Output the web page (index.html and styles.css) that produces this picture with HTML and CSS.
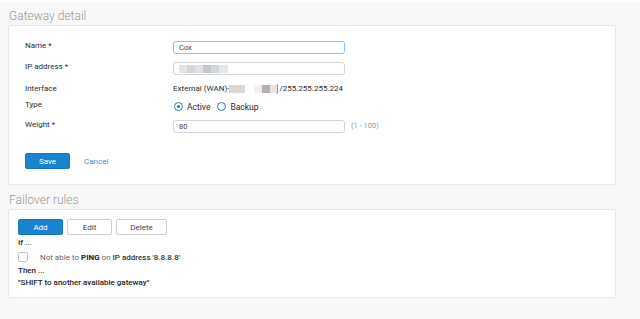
FILE: index.html
```html
<!DOCTYPE html>
<html lang="en">
<head>
  <meta charset="UTF-8" />
  <title>Gateway detail</title>
  <link rel="stylesheet" href="styles.css">
</head>
<body>
  <h2 class="section-title first">Gateway detail</h2>
  <div class="panel detail-panel">
    <div class="row">
      <label class="field-label">Name *</label>
      <div class="input focused">Cox</div>
    </div>
    <div class="row">
      <label class="field-label">IP address *</label>
      <div class="input">
        <span class="blur b1"></span><span class="blur b2"></span><span class="blur b3"></span><span class="blur b4"></span><span class="blur b5"></span><span class="blur b6"></span>
      </div>
    </div>
    <div class="row row-text">
      <label class="field-label">Interface</label>
      <div class="value">External (WAN)-<span class="blur c1"></span><span class="gap"></span><span class="blur c2"></span><span class="blur c3"></span><span class="blur c4"></span><span class="cursor"></span>/255.255.255.224</div>
    </div>
    <div class="row">
      <label class="field-label">Type</label>
      <div class="radios">
        <span class="radio checked"></span><span class="radio-label">Active</span>
        <span class="radio"></span><span class="radio-label">Backup</span>
      </div>
    </div>
    <div class="row">
      <label class="field-label">Weight *</label>
      <div class="input">80</div>
      <span class="hint">(1 - 100)</span>
    </div>
    <div class="actions">
      <button class="btn primary save">Save</button>
      <a class="link">Cancel</a>
    </div>
  </div>

  <h2 class="section-title">Failover rules</h2>
  <div class="panel rules-panel">
    <div class="toolbar">
      <button class="btn primary">Add</button>
      <button class="btn">Edit</button>
      <button class="btn">Delete</button>
    </div>
    <div class="rule-head">If ...</div>
    <div class="rule-row">
      <span class="checkbox"></span>
      <span class="rule-text">Not able to <b>PING</b> on <strong>IP address '8.8.8.8'</strong></span>
    </div>
    <div class="rule-head">Then ...</div>
    <div class="rule-head">"SHIFT to another available gateway"</div>
  </div>
</body>
</html>
```

FILE: styles.css
```css
body {
  margin: 0;
  background-color: #f8f8f8;
  border-top: 2px solid #fdfdfd;
  font-family: Roboto, "Liberation Sans", sans-serif;
  font-size: 8px;
  color: #2a2a2a;
  height: 317px;
  overflow: hidden;
}
.section-title {
  margin: 0;
  padding: 7px 0 0 9px;
  font-size: 12px;
  font-weight: 300;
  line-height: 17px;
  color: #999;
}
.section-title.first {
  padding-top: 6px;
}
.panel {
  margin: 0 24px 0 8px;
  background-color: #fff;
  border: 1px solid #e9e9e9;
  border-radius: 2px;
}
.detail-panel {
  height: 143px;
  box-sizing: content-box;
  padding: 15px 0 0 16px;
}
.row {
  display: flex;
  align-items: flex-start;
  margin-bottom: 8px;
  height: 13px;
}
.row-text {
  margin-bottom: 4px;
}
.row + .row-text + .row {
  margin-bottom: 7px;
}
.field-label {
  width: 148px;
  line-height: 9px;
  flex-shrink: 0;
}
.row-text .field-label {
  line-height: 11px;
}
.input {
  width: 160px;
  height: 11px;
  border: 1px solid #d4d4d4;
  border-radius: 3px;
  padding: 0 5px;
  line-height: 11px;
  font-size: 7.5px;
  color: #444;
  display: flex;
  align-items: center;
}
.input.focused {
  border-color: #8fc0e6;
  box-shadow: 0 0 1px #cfe4f5;
}
.blur {
  display: inline-block;
  height: 8px;
}
.b1 { width: 8px; background: #e4e4e8; }
.b2 { width: 8px; background: #d3d6dc; }
.b3 { width: 8px; background: #e0e2e6; }
.b4 { width: 8px; background: #c3c6d0; }
.b5 { width: 8px; background: #d2d6de; }
.b6 { width: 9px; background: #e6e7ea; }
.value {
  line-height: 11px;
  display: flex;
  align-items: center;
  white-space: pre;
}
.gap { display: inline-block; width: 9px; }
.c1 { width: 16px; background: #ddd8d2; }
.c2 { width: 8px; background: #f3efe9; }
.c3 { width: 8px; background: #b9afb0; }
.c4 { width: 7px; background: #e8e4e6; }
.cursor {
  display: inline-block;
  width: 1px;
  height: 10px;
  background: #6c9fd8;
  margin-right: 1px;
}
.radios {
  display: flex;
  align-items: center;
  height: 13px;
}
.radio {
  width: 7px;
  height: 7px;
  border: 1.5px solid #1b76c8;
  border-radius: 50%;
  position: relative;
  margin-left: 1px;
}
.radio.checked::after {
  content: "";
  position: absolute;
  left: 2px;
  top: 2px;
  width: 3px;
  height: 3px;
  border-radius: 50%;
  background: #1b76c8;
}
.radio-label {
  margin: 0 6px 0 4px;
  font-size: 8.5px;
}
.hint {
  margin-left: 6px;
  line-height: 11px;
  color: #999;
  font-size: 7.5px;
}
.actions {
  display: flex;
  align-items: center;
  margin-top: 20px;
}
.btn {
  height: 16px;
  width: 45px;
  padding: 0;
  border: 1px solid #cfcfcf;
  border-radius: 2px;
  background: #fff;
  color: #444;
  font-family: Roboto, "Liberation Sans", sans-serif;
  font-size: 8px;
  margin-right: 4px;
}
.btn.primary {
  background: #1a83d0;
  border-color: #1877c0;
  color: #fff;
}
.btn.save {
  margin-right: 14px;
}
.link {
  color: #3594d9;
}
.rules-panel {
  height: 78px;
  box-sizing: content-box;
  padding: 9px 0 0 9px;
}
.toolbar {
  display: flex;
  height: 16px;
}
.toolbar .btn:last-child {
  width: 51px;
}
.rule-head {
  line-height: 10px;
  margin-top: 2px;
  font-weight: 500;
  color: #222;
}
.toolbar + .rule-head {
  margin-top: 3px;
}
.rule-row {
  display: flex;
  align-items: center;
  height: 12px;
  margin: 3px 0 3px;
}
.checkbox {
  width: 8px;
  height: 8px;
  border: 1px solid #c4c4c4;
  border-radius: 2px;
  margin-right: 12px;
}
.rule-text {
  color: #666;
}
.rule-text b {
  font-weight: 700;
  color: #222;
}
.rule-text strong {
  font-weight: 500;
  color: #333;
}
```
